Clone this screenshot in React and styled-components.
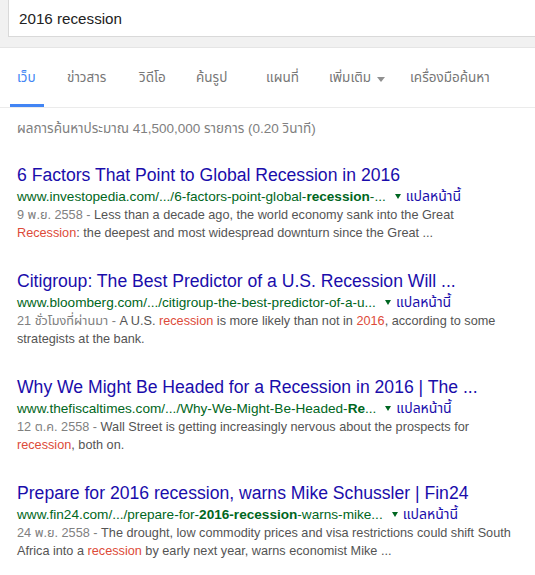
import React from "react";
import styled, { createGlobalStyle } from "styled-components";

const GlobalStyle = createGlobalStyle`
  body {
    margin: 0;
    background: #fff;
    font-family: "Liberation Sans", Arial, "Noto Sans Thai", "Noto Sans", sans-serif;
    overflow: hidden;
  }
`;

const Header = styled.header`
  height: 48px;
  background: #f1f1f1;
  border-bottom: 1px solid #e5e5e5;
  box-sizing: border-box;
`;

const SearchBox = styled.div`
  margin-left: 8px;
  height: 37px;
  background: #fff;
  border: 1px solid #d9d9d9;
  border-top: none;
  border-right: none;
  box-sizing: border-box;
  padding-left: 10px;
  display: flex;
  align-items: center;
  font-size: 15.2px;
  color: #222;
`;

const Tabs = styled.nav`
  height: 60px;
  padding-left: 10px;
  display: flex;
  align-items: stretch;
  border-bottom: 1px solid #ebebeb;
  box-sizing: border-box;
`;

const Tab = styled.div`
  display: flex;
  align-items: center;
  box-sizing: border-box;
  width: ${(p) => (p.$w ? `${p.$w}px` : "auto")};
  padding: 4px 7px 0;
  margin-right: 16px;
  font-size: 13.5px;
  white-space: nowrap;
  color: ${(p) => (p.$active ? "#4285f4" : "#777")};
  border-bottom: 3px solid ${(p) => (p.$active ? "#4285f4" : "transparent")};
`;

const Caret = styled.span`
  display: inline-block;
  margin-left: 6px;
  margin-top: 2px;
  border-left: 4px solid transparent;
  border-right: 4px solid transparent;
  border-top: 5px solid #909090;
`;

const Main = styled.main`
  padding-left: 17px;
`;

const Stats = styled.div`
  margin-top: 13px;
  margin-bottom: 27px;
  font-size: 13.5px;
  line-height: 16px;
  color: #808080;
`;

const Result = styled.div`
  margin-bottom: 28px;
`;

const Title = styled.a`
  display: block;
  font-size: 17.6px;
  line-height: 22px;
  color: #1a0dab;
  text-decoration: none;
  white-space: nowrap;
`;

const UrlRow = styled.div`
  display: flex;
  align-items: center;
  height: 20px;
  font-size: 13.6px;
  white-space: nowrap;
`;

const Url = styled.cite`
  font-style: normal;
  color: #006621;
  b {
    font-weight: bold;
  }
`;

const Arrow = styled.span`
  display: inline-block;
  margin: 1px 5px 0 9px;
  border-left: 3.5px solid transparent;
  border-right: 3.5px solid transparent;
  border-top: 5px solid #006621;
`;

const Translate = styled.a`
  color: #1a0dab;
  text-decoration: none;
  font-size: 14px;
`;

const Snippet = styled.div`
  font-size: 12.7px;
  line-height: 18px;
  color: #545454;
  white-space: nowrap;
  em {
    font-style: normal;
    color: #dd4b39;
  }
`;

const Date = styled.span`
  color: #808080;
`;

const tabs = [
  { label: "เว็บ", active: true, w: 34 },
  { label: "ข่าวสาร", w: 56 },
  { label: "วิดีโอ", w: 41 },
  { label: "ค้นรูป", w: 54 },
  { label: "แผนที่", w: 47 },
  { label: "เพิ่มเติม", caret: true, w: 65 },
  { label: "เครื่องมือค้นหา" },
];

const results = [
  {
    title: "6 Factors That Point to Global Recession in 2016",
    url: (
      <>
        www.investopedia.com/.../6-factors-point-global-<b>recession</b>-...
      </>
    ),
    date: "9 พ.ย. 2558",
    lines: [
      <>Less than a decade ago, the world economy sank into the Great</>,
      <>
        <em>Recession</em>: the deepest and most widespread downturn since the Great ...
      </>,
    ],
  },
  {
    title: "Citigroup: The Best Predictor of a U.S. Recession Will ...",
    url: <>www.bloomberg.com/.../citigroup-the-best-predictor-of-a-u...</>,
    date: "21 ชั่วโมงที่ผ่านมา",
    lines: [
      <>
        A U.S. <em>recession</em> is more likely than not in <em>2016</em>, according to some
      </>,
      <>strategists at the bank.</>,
    ],
  },
  {
    title: "Why We Might Be Headed for a Recession in 2016 | The ...",
    url: (
      <>
        www.thefiscaltimes.com/.../Why-We-Might-Be-Headed-<b>Re</b>...
      </>
    ),
    date: "12 ต.ค. 2558",
    lines: [
      <>Wall Street is getting increasingly nervous about the prospects for</>,
      <>
        <em>recession</em>, both on.
      </>,
    ],
  },
  {
    title: "Prepare for 2016 recession, warns Mike Schussler | Fin24",
    url: (
      <>
        www.fin24.com/.../prepare-for-<b>2016-recession</b>-warns-mike...
      </>
    ),
    date: "24 พ.ย. 2558",
    lines: [
      <>The drought, low commodity prices and visa restrictions could shift South</>,
      <>
        Africa into a <em>recession</em> by early next year, warns economist Mike ...
      </>,
    ],
  },
];

export default function App() {
  return (
    <>
      <GlobalStyle />
      <Header>
        <SearchBox>2016 recession</SearchBox>
      </Header>
      <Tabs>
        {tabs.map((t) => (
          <Tab key={t.label} $active={t.active} $w={t.w}>
            {t.label}
            {t.caret && <Caret />}
          </Tab>
        ))}
      </Tabs>
      <Main>
        <Stats>ผลการค้นหาประมาณ 41,500,000 รายการ (0.20 วินาที)</Stats>
        {results.map((r) => (
          <Result key={r.title}>
            <Title href="#">{r.title}</Title>
            <UrlRow>
              <Url>{r.url}</Url>
              <Arrow />
              <Translate href="#">แปลหน้านี้</Translate>
            </UrlRow>
            <Snippet>
              <Date>{r.date} - </Date>
              {r.lines[0]}
              <br />
              {r.lines[1]}
            </Snippet>
          </Result>
        ))}
      </Main>
    </>
  );
}
